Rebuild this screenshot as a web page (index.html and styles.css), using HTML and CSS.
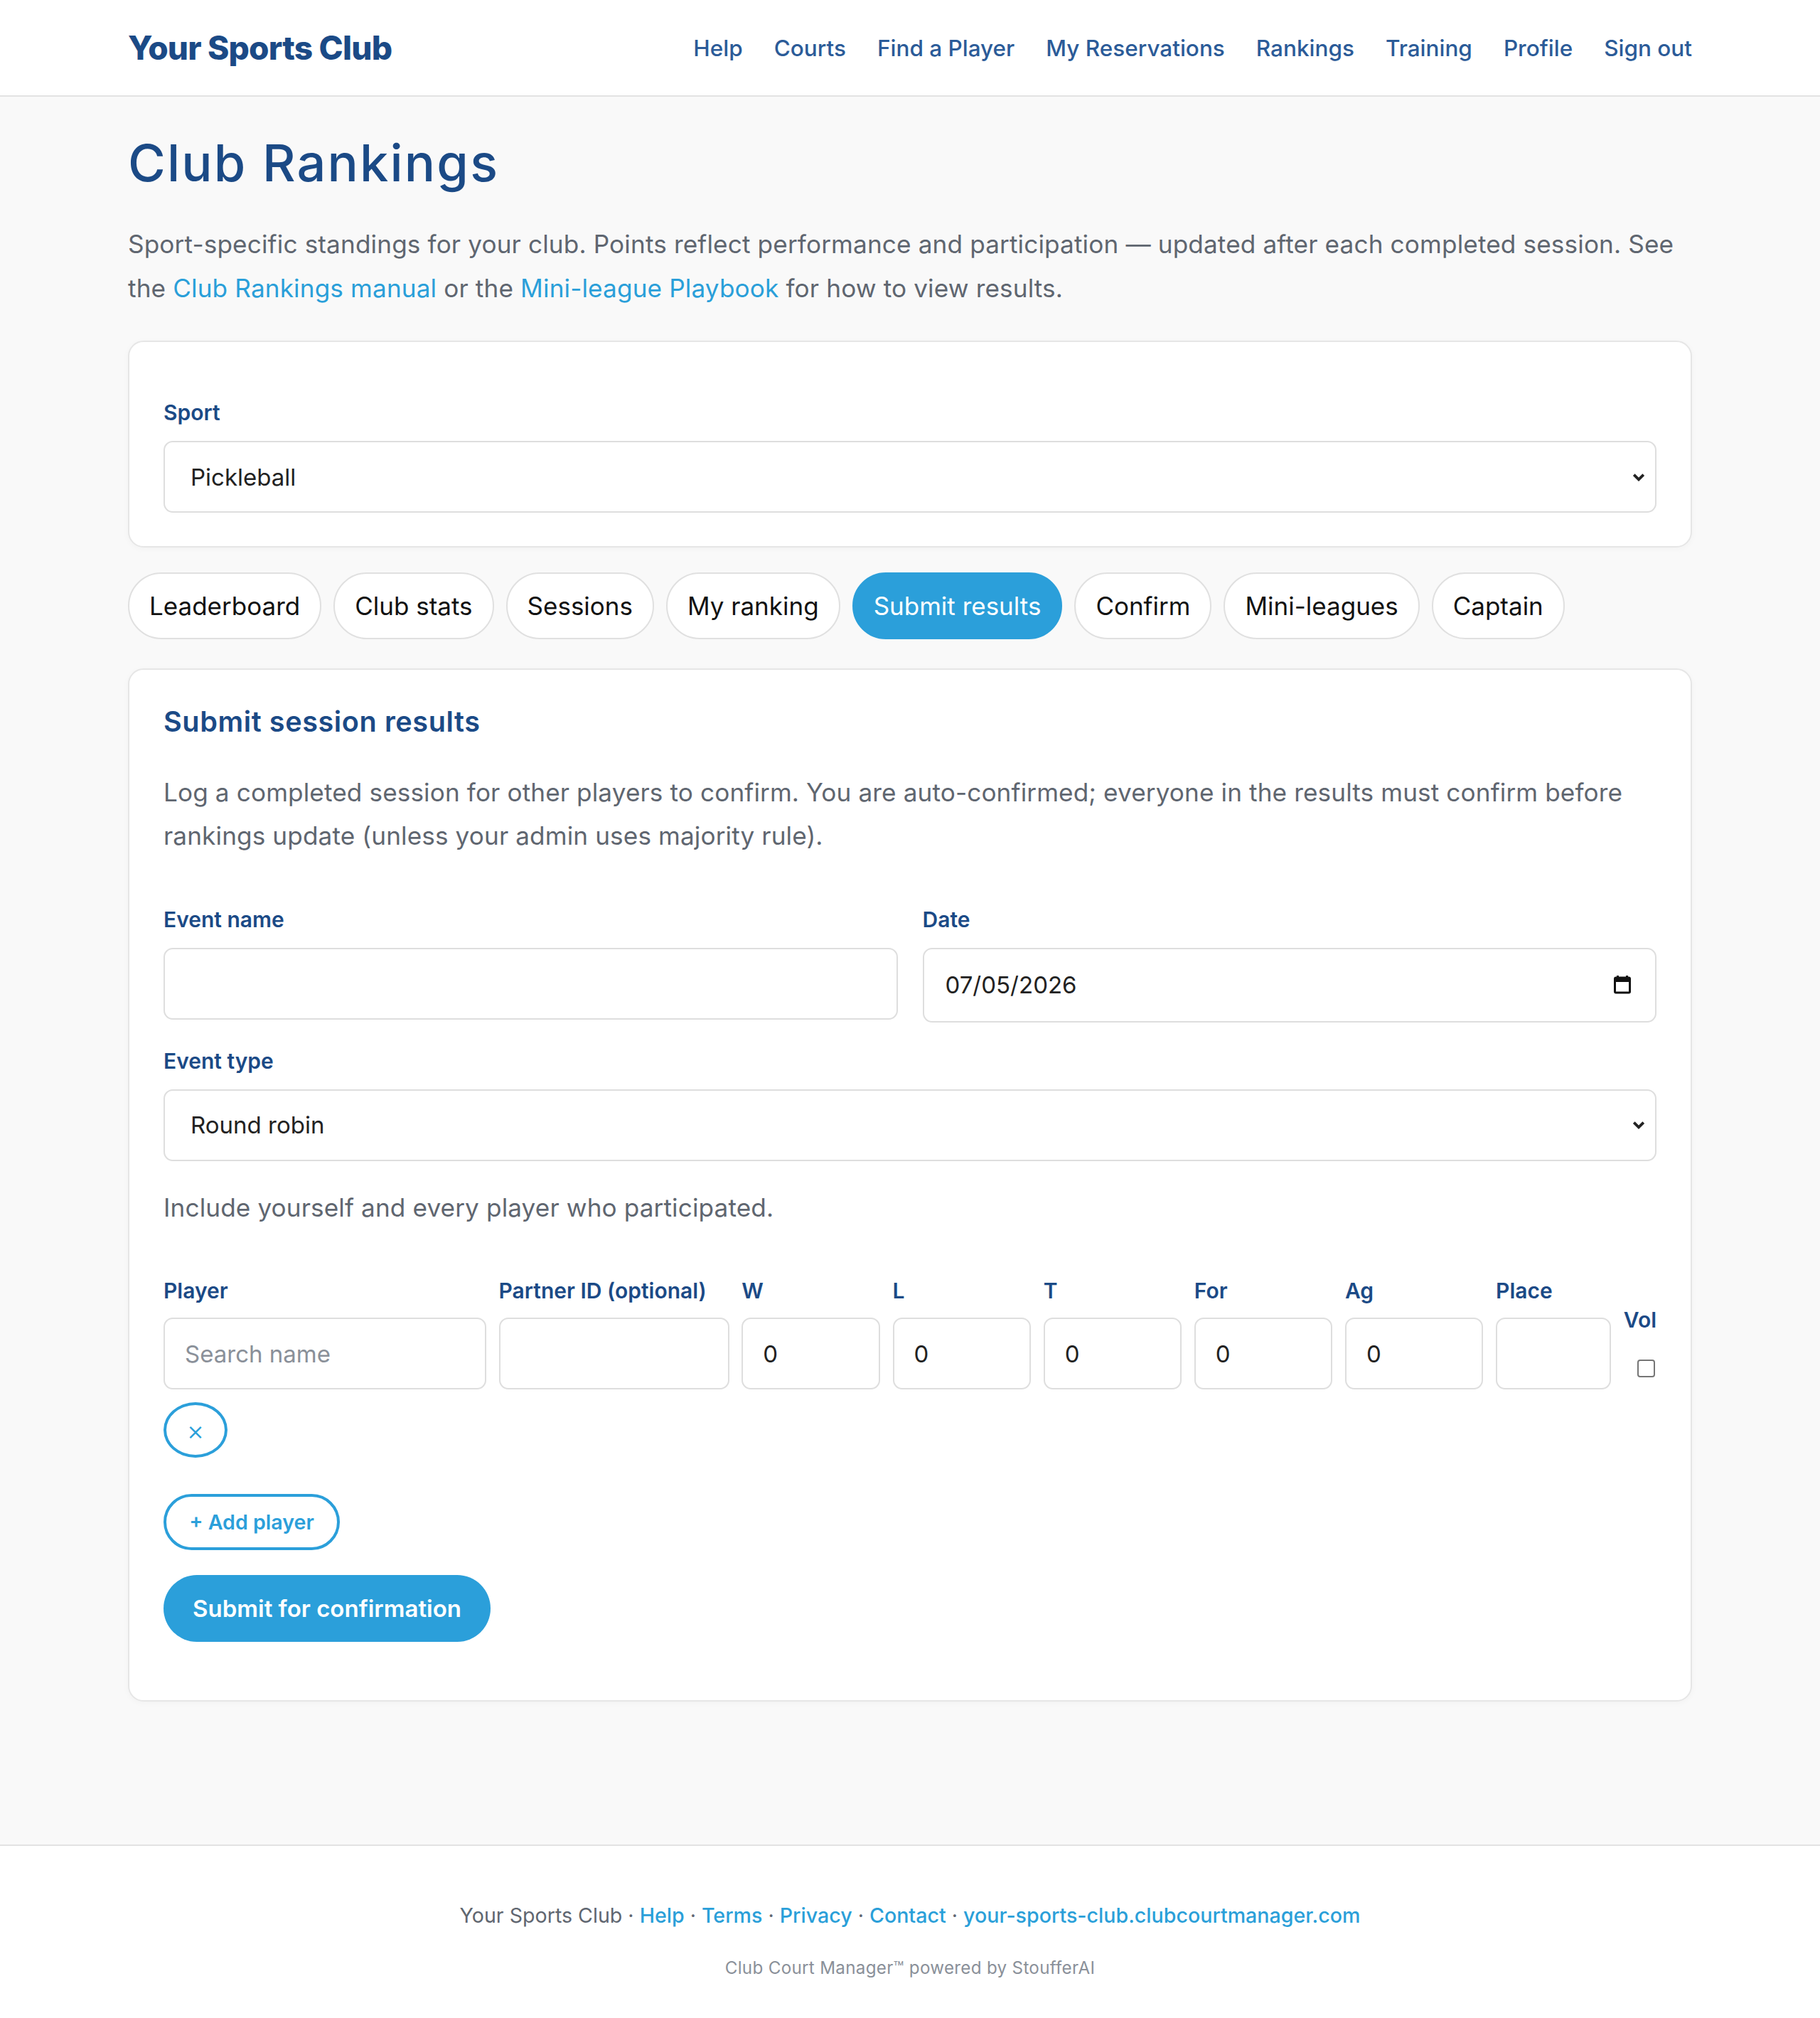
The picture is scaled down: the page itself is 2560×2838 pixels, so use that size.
FILE: index.html
```html
<!DOCTYPE html>
<html lang="en">
<head>
  <meta charset="UTF-8">
  <meta name="viewport" content="width=device-width, initial-scale=1.0">
  <title>Club Rankings - Your Sports Club</title>
  <link rel="stylesheet" href="styles.css">
</head>
<body>
  <header class="site-header">
    <div class="wrap header-inner">
      <a class="brand" href="#">Your Sports Club</a>
      <nav class="main-nav">
        <a href="#">Help</a>
        <a href="#">Courts</a>
        <a href="#">Find a Player</a>
        <a href="#">My Reservations</a>
        <a href="#">Rankings</a>
        <a href="#">Training</a>
        <a href="#">Profile</a>
        <a href="#">Sign out</a>
      </nav>
    </div>
  </header>

  <main class="wrap page">
    <h1 class="page-title">Club Rankings</h1>
    <p class="lead">Sport-specific standings for your club. Points reflect performance and participation — updated after each completed session. See the <a href="#">Club Rankings manual</a> or the <a href="#">Mini-league Playbook</a> for how to view results.</p>

    <section class="card sport-card">
      <label class="field-label" for="sport">Sport</label>
      <div class="select-wrap">
        <select id="sport" class="control">
          <option>Pickleball</option>
        </select>
        <svg class="chevron" viewBox="0 0 16 12"><path d="M2 3 L8 9 L14 3" fill="none" stroke="#222" stroke-width="3.4"/></svg>
      </div>
    </section>

    <div class="tabs">
      <button class="tab">Leaderboard</button>
      <button class="tab">Club stats</button>
      <button class="tab">Sessions</button>
      <button class="tab">My ranking</button>
      <button class="tab active">Submit results</button>
      <button class="tab">Confirm</button>
      <button class="tab">Mini-leagues</button>
      <button class="tab">Captain</button>
    </div>

    <section class="card">
      <h2 class="card-title">Submit session results</h2>
      <p class="muted intro">Log a completed session for other players to confirm. You are auto-confirmed; everyone in the results must confirm before rankings update (unless your admin uses majority rule).</p>

      <div class="form-row">
        <div class="field">
          <label class="field-label" for="event-name">Event name</label>
          <input id="event-name" class="control" type="text">
        </div>
        <div class="field">
          <label class="field-label" for="event-date">Date</label>
          <div class="date-wrap">
            <input id="event-date" class="control date" type="text" value="07/05/2026">
            <svg class="cal-icon" viewBox="0 0 24 28"><rect x="4" y="2" width="3" height="5" fill="#111"/><rect x="17" y="2" width="3" height="5" fill="#111"/><rect x="1.5" y="5" width="21" height="21" rx="1.5" fill="none" stroke="#111" stroke-width="3"/><rect x="1.5" y="5" width="21" height="6" fill="#111"/></svg>
          </div>
        </div>
      </div>

      <div class="field type-field">
        <label class="field-label" for="event-type">Event type</label>
        <div class="select-wrap">
          <select id="event-type" class="control">
            <option>Round robin</option>
          </select>
          <svg class="chevron" viewBox="0 0 16 12"><path d="M2 3 L8 9 L14 3" fill="none" stroke="#222" stroke-width="3.4"/></svg>
        </div>
      </div>

      <p class="muted hint">Include yourself and every player who participated.</p>

      <div class="player-row">
        <div class="cell">
          <label class="field-label">Player</label>
          <input class="control small" type="text" placeholder="Search name">
        </div>
        <div class="cell">
          <label class="field-label">Partner ID (optional)</label>
          <input class="control small" type="text">
        </div>
        <div class="cell">
          <label class="field-label">W</label>
          <input class="control small" type="text" value="0">
        </div>
        <div class="cell">
          <label class="field-label">L</label>
          <input class="control small" type="text" value="0">
        </div>
        <div class="cell">
          <label class="field-label">T</label>
          <input class="control small" type="text" value="0">
        </div>
        <div class="cell">
          <label class="field-label">For</label>
          <input class="control small" type="text" value="0">
        </div>
        <div class="cell">
          <label class="field-label">Ag</label>
          <input class="control small" type="text" value="0">
        </div>
        <div class="cell">
          <label class="field-label">Place</label>
          <input class="control small" type="text">
        </div>
        <div class="cell vol-cell">
          <label class="field-label">Vol</label>
          <input class="vol-check" type="checkbox">
        </div>
      </div>

      <button class="remove-btn" title="Remove">×</button>
      <div>
        <button class="btn-outline">+ Add player</button>
      </div>
      <div>
        <button class="btn-primary">Submit for confirmation</button>
      </div>
    </section>
  </main>

  <footer class="site-footer">
    <p class="footer-links">Your Sports Club · <a href="#">Help</a> · <a href="#">Terms</a> · <a href="#">Privacy</a> · <a href="#">Contact</a> · <a href="#">your-sports-club.clubcourtmanager.com</a></p>
    <p class="footer-small">Club Court Manager™ powered by StoufferAI</p>
  </footer>
</body>
</html>
```

FILE: styles.css
```css
body {
  margin: 0;
  font-family: Inter, "Open Sans", sans-serif;
  color: #222;
  background: #f9f9f9;
}

a {
  text-decoration: none;
}

.wrap {
  max-width: 2200px;
  margin: 0 auto;
}

/* header */
.site-header {
  background: #fff;
  border-bottom: 2px solid #e3e3e3;
}
.header-inner {
  height: 134px;
  display: flex;
  align-items: center;
  justify-content: space-between;
}
.brand {
  font-size: 46px;
  font-weight: 800;
  letter-spacing: -0.8px;
  color: #1b4a86;
}
.main-nav {
  display: flex;
  gap: 44px;
}
.main-nav a {
  font-size: 31.5px;
  font-weight: 500;
  color: #2b5b98;
}

/* page */
.page {
  padding: 51px 0 201px;
}
.page-title {
  margin: 0;
  font-size: 72px;
  line-height: 84px;
  font-weight: 500;
  letter-spacing: 2.2px;
  color: #1b4a86;
}
.lead {
  margin: 42px 0 0;
  font-size: 35.2px;
  line-height: 61.6px;
  letter-spacing: 0.12px;
  color: #5f6670;
}
.lead a {
  color: #2a9fd9;
}

.card {
  background: #fff;
  border: 2px solid #e6e6e6;
  border-radius: 22px;
  box-shadow: 0 2px 10px rgba(0, 0, 0, 0.03);
  padding: 48px 48px 82px;
}
.sport-card {
  margin-top: 43px;
  padding: 78px 48px 47px;
}

.field-label {
  display: block;
  font-size: 30px;
  line-height: 43px;
  font-weight: 600;
  color: #1b4a86;
}

.control {
  display: block;
  box-sizing: border-box;
  width: 100%;
  height: 101px;
  margin-top: 18px;
  padding: 0 26px;
  border: 2px solid #dedede;
  border-radius: 13px;
  background: #fff;
  font-family: inherit;
  font-size: 33px;
  color: #222;
}
.control::placeholder {
  color: #8a9099;
}
select.control {
  appearance: none;
  padding-left: 36px;
}

.select-wrap,
.date-wrap {
  position: relative;
}
.chevron {
  position: absolute;
  right: 16px;
  top: 50%;
  margin-top: -7px;
  width: 18px;
  height: 14px;
}
.cal-icon {
  position: absolute;
  right: 36px;
  top: 37px;
  width: 24px;
  height: 28px;
}
.control.date {
  height: 105px;
  padding-left: 30px;
}

/* tabs */
.tabs {
  display: flex;
  gap: 17px;
  margin: 35px 0 41px;
}
.tab {
  height: 94px;
  padding: 0 28px;
  border: 2px solid #e0e0e0;
  border-radius: 999px;
  background: #fff;
  font-family: inherit;
  font-size: 35px;
  color: #111;
}
.tab.active {
  background: #2b9fda;
  border-color: #2b9fda;
  color: #fff;
}

/* results form */
.card-title {
  margin: 0;
  font-size: 39.6px;
  line-height: 1.3;
  font-weight: 600;
  letter-spacing: 0.6px;
  color: #1b4a86;
}
.muted {
  font-size: 35.2px;
  line-height: 61.6px;
  letter-spacing: 0.1px;
  color: #5f6670;
}
.intro {
  margin: 42px 0 0;
}
.form-row {
  display: grid;
  grid-template-columns: 1fr 1fr;
  gap: 35px;
  margin-top: 65px;
}
.type-field {
  margin-top: 33px;
}
.hint {
  margin: 35px 0 0;
}

.player-row {
  display: grid;
  grid-template-columns: 2.8fr 2fr 1.2fr 1.2fr 1.2fr 1.2fr 1.2fr 1fr auto;
  gap: 17.6px;
  margin-top: 65px;
}
.control.small {
  margin-top: 16px;
  padding-left: 28px;
}
.vol-cell {
  align-self: end;
  padding-bottom: 17px;
}
.vol-check {
  display: block;
  appearance: none;
  width: 25px;
  height: 25px;
  margin: 34px 0 0 19px;
  border: 2px solid #767676;
  border-radius: 4px;
  background: #fff;
}

.remove-btn {
  display: block;
  width: 90px;
  height: 78px;
  margin-top: 18px;
  border: 4px solid #2b9fda;
  border-radius: 50%;
  background: #fff;
  color: #2b9fda;
  font-family: inherit;
  font-size: 38px;
  font-weight: 300;
}
.btn-outline {
  margin-top: 51px;
  height: 79px;
  width: 248px;
  border: 4px solid #2b9fda;
  border-radius: 999px;
  background: #fff;
  color: #2b9fda;
  font-family: inherit;
  font-size: 28.6px;
  font-weight: 600;
}
.btn-primary {
  margin-top: 35px;
  height: 94px;
  width: 460px;
  border: 0;
  border-radius: 999px;
  background: #2b9fda;
  color: #fff;
  font-family: inherit;
  font-size: 33px;
  font-weight: 600;
}

/* footer */
.site-footer {
  background: #fff;
  border-top: 2px solid #e3e3e3;
  padding: 75px 0 51px;
  text-align: center;
}
.site-footer p {
  margin: 0;
}
.footer-links {
  font-size: 28.6px;
  line-height: 1.6;
  color: #5f6670;
}
.footer-links a {
  color: #2a9fd9;
  font-weight: 500;
}
.footer-small {
  margin-top: 32px !important;
  font-size: 24.2px;
  line-height: 1.6;
  letter-spacing: 0.3px;
  color: #8a9099;
}
```
